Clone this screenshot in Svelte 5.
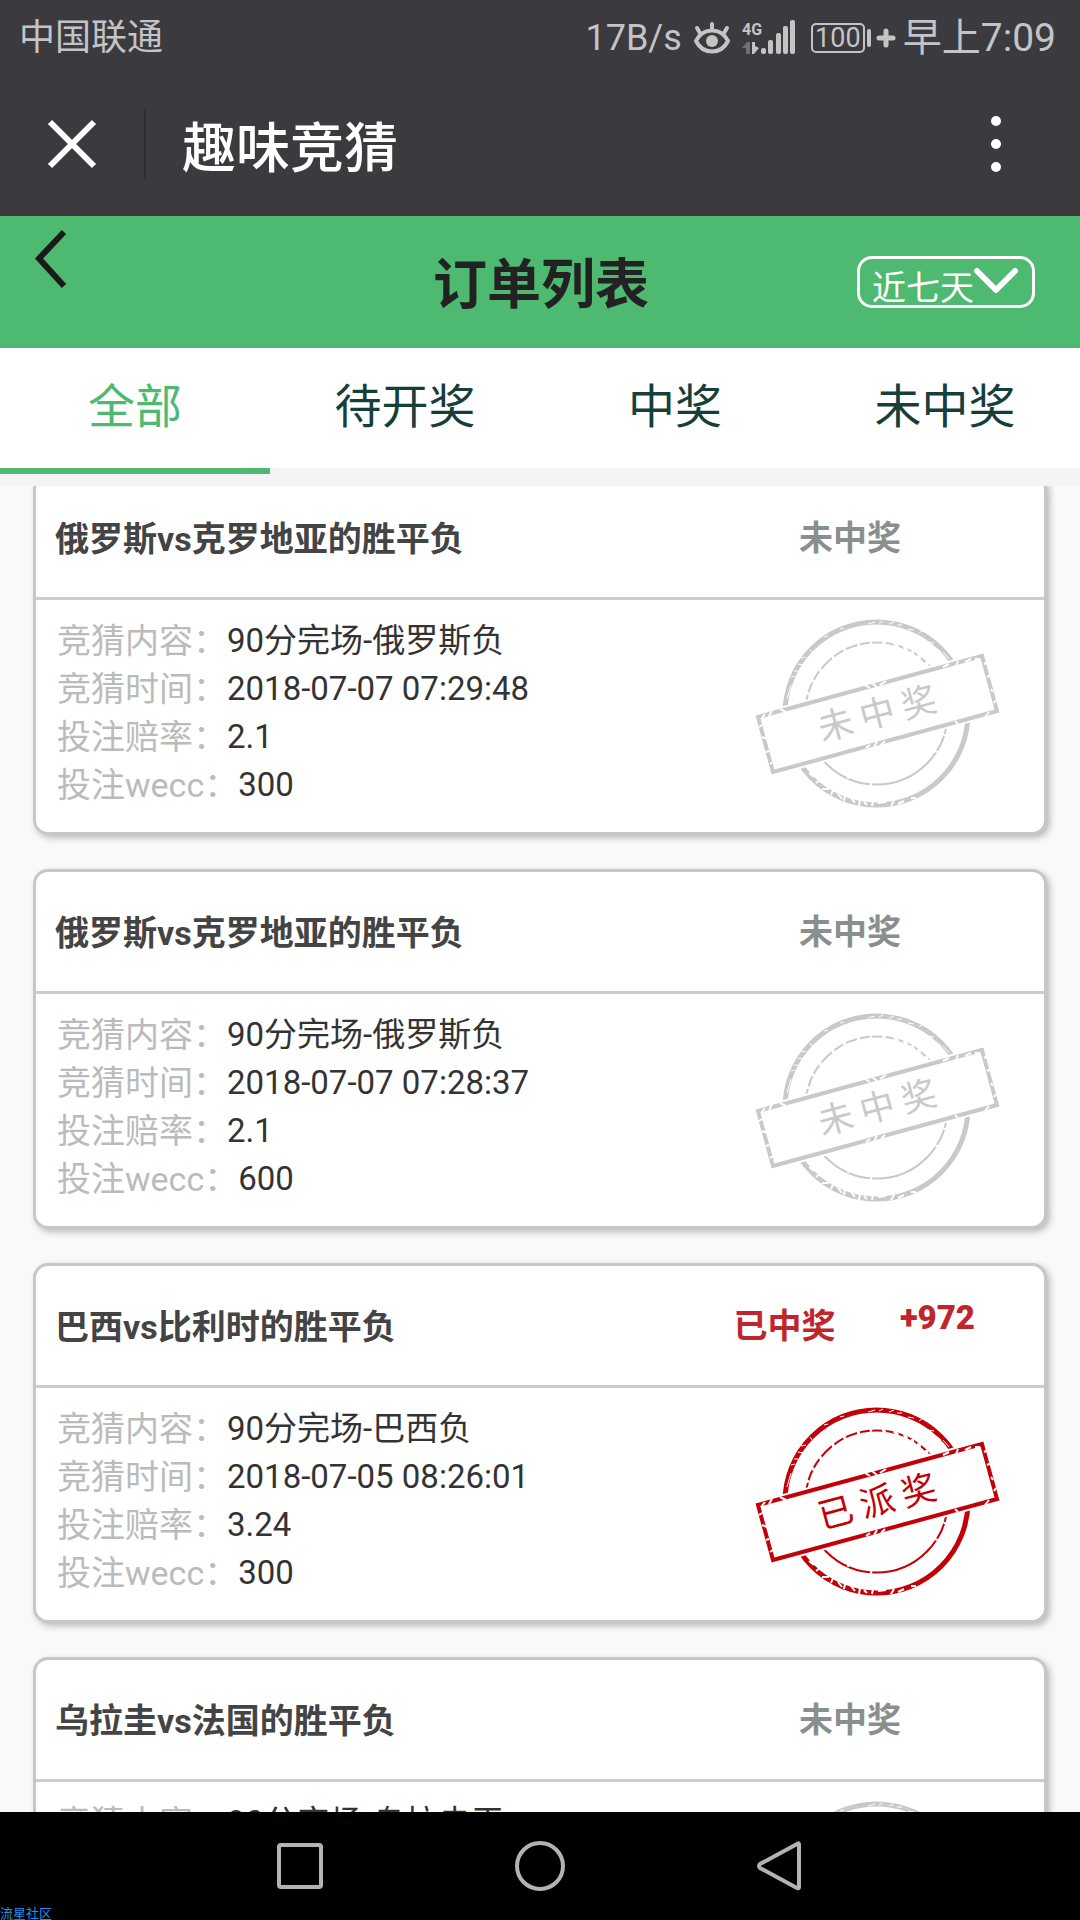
<script>
  const tabs = ['全部', '待开奖', '中奖', '未中奖'];
  let activeTab = $state('全部');
  let range = $state('近七天');

  const orders = [
    {
      title: '俄罗斯vs克罗地亚的胜平负',
      status: '未中奖',
      stamp: '未中奖',
      rows: [
        ['竞猜内容：', '90分完场-俄罗斯负'],
        ['竞猜时间：', '2018-07-07 07:29:48'],
        ['投注赔率：', '2.1'],
        ['投注wecc：', '300']
      ]
    },
    {
      title: '俄罗斯vs克罗地亚的胜平负',
      status: '未中奖',
      stamp: '未中奖',
      rows: [
        ['竞猜内容：', '90分完场-俄罗斯负'],
        ['竞猜时间：', '2018-07-07 07:28:37'],
        ['投注赔率：', '2.1'],
        ['投注wecc：', '600']
      ]
    },
    {
      title: '巴西vs比利时的胜平负',
      status: '已中奖',
      amount: '+972',
      stamp: '已派奖',
      rows: [
        ['竞猜内容：', '90分完场-巴西负'],
        ['竞猜时间：', '2018-07-05 08:26:01'],
        ['投注赔率：', '3.24'],
        ['投注wecc：', '300']
      ]
    },
    {
      title: '乌拉圭vs法国的胜平负',
      status: '未中奖',
      stamp: '未中奖',
      rows: [['竞猜内容：', '90分完场-乌拉圭平']]
    }
  ];
</script>

<div class="screen">
  <div class="status-bar">
    <span class="carrier">中国联通</span>
    <span class="speed">17B/s</span>
    <svg class="eye" width="36" height="34" viewBox="0 0 36 34" aria-hidden="true">
      <g fill="none" stroke="currentColor" stroke-width="4" stroke-linecap="round">
        <path d="M2 20C9 6 27 6 34 20C27 34 9 34 2 20Z" stroke-width="4" stroke-linejoin="round" />
        <path d="M18 8V3M6 12L3 7M30 12L33 7" />
      </g>
      <circle cx="18" cy="20" r="6" fill="currentColor" />
    </svg>
    <svg class="signal" width="54" height="36" viewBox="0 0 54 36" aria-hidden="true">
      <text x="0" y="15" font-size="16" font-weight="700" fill="currentColor">4G</text>
      <path d="M0 28L5 22H8V34H4V28Z" fill="currentColor" opacity="0.4" />
      <path d="M10 22H13V26L17 28L12 34H10Z" fill="currentColor" />
      <g fill="currentColor">
        <rect x="19" y="28" width="5" height="6" rx="2" />
        <rect x="26" y="20" width="5" height="14" rx="2" />
        <rect x="34" y="13" width="5" height="21" rx="2" />
        <rect x="41" y="6" width="5" height="28" rx="2" />
        <rect x="48" y="0" width="5" height="34" rx="2" />
      </g>
    </svg>
    <span class="battery">100</span>
    <svg class="charge" width="29" height="18" viewBox="0 0 29 18" aria-hidden="true">
      <rect x="1" y="0" width="4" height="18" rx="2" fill="currentColor" />
      <path d="M20 2V16M13 9H27" stroke="currentColor" stroke-width="5" stroke-linecap="round" />
    </svg>
    <span class="clock">早上7:09</span>
  </div>

  <header class="app-bar">
    <button class="close" aria-label="关闭">
      <svg width="48" height="48" viewBox="0 0 48 48">
        <path d="M2 2L46 46M46 2L2 46" stroke="currentColor" stroke-width="6" />
      </svg>
    </button>
    <span class="app-title">趣味竞猜</span>
    <button class="more" aria-label="更多">
      <svg width="12" height="58" viewBox="0 0 12 58" fill="currentColor">
        <circle cx="6" cy="6" r="5" />
        <circle cx="6" cy="29" r="5" />
        <circle cx="6" cy="52" r="5" />
      </svg>
    </button>
  </header>

  <div class="page-bar">
    <button class="back" aria-label="返回">
      <svg width="32" height="58" viewBox="0 0 32 58" fill="none" stroke="currentColor" stroke-width="6">
        <path d="M29 2L4 28.500L29 56" />
      </svg>
    </button>
    <h1>订单列表</h1>
    <label class="range">
      <select bind:value={range} aria-label="时间范围">
        <option>近七天</option>
      </select>
      <svg width="44" height="28" viewBox="0 0 44 28" aria-hidden="true">
        <path d="M3 4L22 23L41 4" fill="none" stroke="currentColor" stroke-width="6" stroke-linecap="round" stroke-linejoin="round" />
      </svg>
    </label>
  </div>

  <nav class="tabs">
    {#each tabs as tab}
      <button class:active={activeTab === tab} onclick={() => (activeTab = tab)}>{tab}</button>
    {/each}
  </nav>

  <main class="list">
    <div class="cards">
      {#each orders as order}
        <article class="card" class:won={order.amount}>
          <div class="card-head">
            <h2>{order.title}</h2>
            <div class="result">
              <span class="state">{order.status}</span>
              {#if order.amount}<span class="amount">{order.amount}</span>{/if}
            </div>
          </div>
          <div class="card-body">
            <dl>
              {#each order.rows as [label, value]}
                <div>
                  <dt>{label}</dt>
                  <dd>{value}</dd>
                </div>
              {/each}
            </dl>
            <svg class="stamp" width="244" height="190" viewBox="0 0 244 190" fill="none">
              <circle cx="120.500" cy="94.500" r="91.500" stroke="currentColor" stroke-width="5" />
              <circle cx="120.500" cy="94.500" r="71" stroke="currentColor" stroke-width="2" />
              <!-- worn ink -->
              <g stroke="#fff">
                <path d="M112 5L119 3M123 4L127 2M133 5L138 3M141 6L146 6M152 10L158 11M163 14L166 12M172 23L178 24M180 29L185 33M187 33L193 40M198 46L201 51" stroke-width="1" />
                <path d="M31 80L35 66M35 58L39 57M38 52L42 52M42 45L47 46M45 39L50 38M54 30L56 33M68 18L72 17M84 10L88 9" stroke-width="1" />
                <path d="M53 154L58 158M60 164L64 161M66 170L73 170M75 176L77 171M82 175L86 180M88 182L89 177M95 179L99 184M103 187L104 181M108 183L111 186M116 187L117 182M122 184L130 183M135 187L138 182M142 185L148 182M155 179L160 179" stroke-width="2" />
                <path d="M114 23L116 24M127 22L129 26M138 24L142 28M148 27L151 32M156 32L157 36M161 37L165 39M170 43L172 50M102 23L103 28M88 29L90 34M76 36L79 42M63 48L66 54M55 60L58 63M49 73L53 75" stroke-width="3" />
                <path d="M92 160L93 156M114 168L116 163M169 148L173 150M178 132L182 133M187 115L190 117" stroke-width="2" />
              </g>
              <path d="M2 98L226 37L241 92L17 153Z" fill="#fff" stroke="#fff" stroke-width="8" />
              <path d="M2 98L226 37L241 92L17 153Z" stroke="currentColor" stroke-width="4" />
              <g stroke="#fff" stroke-width="2">
                <path d="M5 100L9 95M13 97L16 92M24 90L30 93M109 66L114 69M116 64L121 68M124 66L130 62M187 48L193 45M200 47L202 42M209 43L215 40M219 40L224 40" />
                <path d="M3 108L6 106M6 118L11 120M10 133L13 132M14 145L17 143M228 45L232 43M231 58L235 56M235 70L237 73M238 84L240 81" />
                <path d="M110 129L114 126M118 128L121 123M125 126L129 122M199 102L202 105M229 98L233 93" />
              </g>
              <g class="stamp-text" transform="translate(121 94) rotate(-15)">
                {#each order.stamp as char, i}
                  <text x={(i - 1) * 43} y="13" text-anchor="middle">{char}</text>
                {/each}
              </g>
            </svg>
          </div>
        </article>
      {/each}
    </div>
  </main>

  <footer class="nav-bar">
    <button aria-label="最近任务">
      <svg width="52" height="52" viewBox="0 0 52 52"><rect x="5" y="5" width="42" height="42" rx="2" /></svg>
    </button>
    <button aria-label="主屏幕">
      <svg width="52" height="52" viewBox="0 0 52 52"><circle cx="26" cy="26" r="23" /></svg>
    </button>
    <button aria-label="返回上一页">
      <svg width="52" height="52" viewBox="0 0 52 52"><path d="M44 3.500Q45 3 45 5V47Q45 49 43 48L6 28Q4 26 6 24Z" /></svg>
    </button>
    <span class="community">流星社区</span>
  </footer>
</div>

<style>
  :global(body) {
    margin: 0;
  }

  .screen {
    display: flex;
    flex-direction: column;
    height: 100vh;
    overflow: hidden;
    background: #f9f9f9;
    font-family: Roboto, 'Noto Sans CJK SC', sans-serif;
    font-size: 34px;
    color: #333;
  }

  button,
  select {
    margin: 0;
    padding: 0;
    border: 0;
    background: none;
    color: inherit;
    font: inherit;
  }

  svg {
    display: block;
    flex: none;
    overflow: visible;
  }

  .status-bar {
    display: flex;
    align-items: center;
    flex: none;
    height: 68px;
    padding: 4px 24px 0 19px;
    background: #3a3a3f;
    color: #c4c4c6;
    font-size: 36px;
    line-height: 68px;
  }

  .carrier {
    flex: 1;
  }

  .eye,
  .signal {
    margin-left: 12px;
  }

  .battery {
    box-sizing: border-box;
    width: 54px;
    margin-left: 15px;
    border: 2px solid currentColor;
    border-radius: 5px;
    font-size: 27px;
    line-height: 26px;
    text-align: center;
  }

  .charge {
    margin-left: 1px;
  }

  .clock {
    margin-left: 8px;
    font-size: 39px;
  }

  .app-bar {
    display: flex;
    align-items: center;
    flex: none;
    height: 144px;
    background: #3a3a3f;
    color: #fff;
  }

  .close {
    display: flex;
    align-items: center;
    justify-content: center;
    box-sizing: border-box;
    width: 146px;
    height: 72px;
    border-right: 2px solid #2e2e32;
  }

  .app-title {
    flex: 1;
    padding-left: 36px;
    font-size: 54px;
    font-weight: 500;
  }

  .more {
    padding: 0 78px;
  }

  .page-bar {
    display: grid;
    grid-template-columns: 1fr auto 1fr;
    align-items: center;
    flex: none;
    height: 132px;
    padding: 0 45px 0 35px;
    background: #4db971;
  }

  .back {
    align-self: start;
    justify-self: start;
    padding-top: 14px;
    color: #1a1a1a;
  }

  h1 {
    margin: 0;
    padding: 8px 0 0 12px;
    color: #222;
    font-size: 54px;
    font-weight: 700;
    line-height: 72px;
  }

  .range {
    display: flex;
    justify-self: end;
    box-sizing: border-box;
    height: 52px;
    padding: 0 14px 0 12px;
    border: 3px solid #fff;
    border-radius: 15px;
    color: #fff;
  }

  .range select {
    height: 46px;
    padding-top: 12px;
    appearance: none;
    line-height: 34px;
  }

  .range svg {
    margin-top: 8px;
  }

  .tabs {
    display: grid;
    grid-template-columns: repeat(4, 1fr);
    flex: none;
    border-bottom: 12px solid #f4f4f4;
    background: #fff;
  }

  .tabs button {
    height: 126px;
    padding-bottom: 12px;
    border-bottom: 6px solid #f4f4f4;
    color: #163f3a;
    font-size: 47px;
  }

  .tabs .active {
    border-color: #4db971;
    color: #4db971;
  }

  .list {
    flex: 1;
    min-height: 0;
    overflow: hidden;
  }

  /* The list is scrolled slightly past the top edge of the first card. */
  .cards {
    display: flex;
    flex-direction: column;
    gap: 34px;
    margin-top: -11px;
    padding: 0 33px;
  }

  .card {
    border: 3px solid #c7c7c7;
    border-radius: 15px;
    background: #fff;
    box-shadow: 3px 3px 6px rgba(60, 40, 40, 0.3);
  }

  .card-head {
    display: flex;
    align-items: center;
    height: 119px;
    padding: 0 30px 0 19px;
    border-bottom: 3px solid #ccc;
  }

  h2 {
    flex: 1;
    margin: 0;
    padding-bottom: 3px;
    color: #444;
    font-size: 34px;
    font-weight: 700;
  }

  .result {
    display: grid;
    box-sizing: border-box;
    width: 306px;
    padding-right: 22px;
    color: #8a8f8d;
    font-weight: 700;
    line-height: 48px;
    text-align: center;
  }

  .won .result {
    grid-template-columns: 1fr 1fr;
    padding-right: 0;
    color: #c0252b;
  }

  .amount {
    font-size: 33px;
    font-weight: 900;
    line-height: 32px;
  }

  .card-body {
    display: flex;
    justify-content: space-between;
    min-height: 215px;
    padding: 17px 44px 0 21px;
  }

  dl {
    margin: 0;
    line-height: 48px;
  }

  dl div {
    display: flex;
  }

  dt {
    color: #bbb;
  }

  dd {
    margin: 0;
    font-size: 33px;
  }

  .stamp {
    margin-top: 2px;
    color: #c9c9c9;
  }

  .won .stamp {
    color: #c30007;
  }

  .stamp-text {
    fill: currentColor;
    font-size: 35px;
  }

  .nav-bar {
    position: relative;
    display: flex;
    align-items: center;
    justify-content: center;
    gap: 188px;
    flex: none;
    height: 108px;
    background: #000;
  }

  .nav-bar svg {
    fill: none;
    stroke: #b3b3b3;
    stroke-width: 4;
    stroke-linejoin: round;
  }

  .community {
    position: absolute;
    bottom: 0;
    left: 0;
    color: #2490e8;
    font-size: 13px;
    line-height: 12px;
  }
</style>
